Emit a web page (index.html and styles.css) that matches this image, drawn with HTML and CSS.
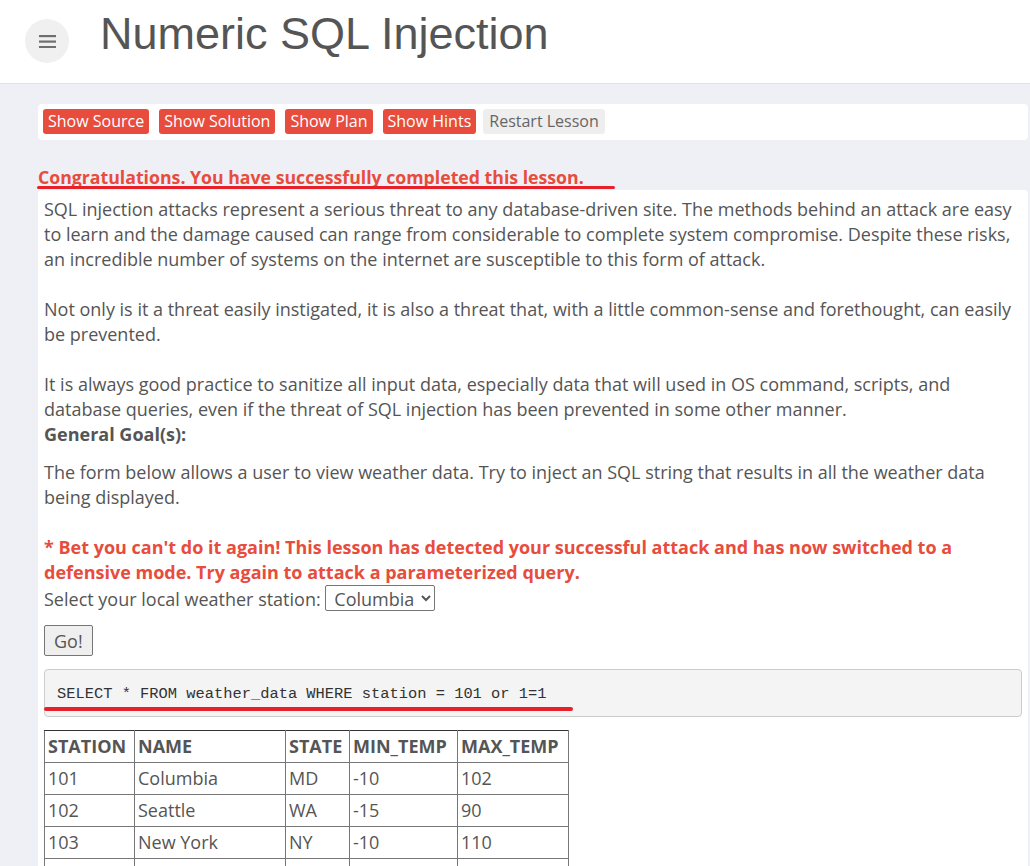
FILE: index.html
```html
<!DOCTYPE html>
<html>
<head>
<meta charset="utf-8">
<link rel="stylesheet" href="styles.css">
</head>
<body>
<header class="topbar">
  <button class="menu-btn" aria-label="menu">
    <svg width="17" height="13" viewBox="0 0 17 13"><rect x="0" y="0" width="17" height="2.2" fill="#6f6f6f"/><rect x="0" y="5.5" width="17" height="2.2" fill="#6f6f6f"/><rect x="0" y="11" width="17" height="2.2" fill="#6f6f6f"/></svg>
  </button>
  <h1 class="title">Numeric SQL Injection</h1>
</header>
<main class="main">
  <div class="toolbar">
    <span class="btn btn-red">Show Source</span>
    <span class="btn btn-red">Show Solution</span>
    <span class="btn btn-red">Show Plan</span>
    <span class="btn btn-red">Show Hints</span>
    <span class="btn btn-grey">Restart Lesson</span>
  </div>
  <div class="congrats"><span class="mark mark-congrats">Congratulations. You have successfully completed this lesson.</span></div>
  <section class="panel">
    <p class="para">SQL injection attacks represent a serious threat to any database-driven site. The methods behind an attack are easy to learn and the damage caused can range from considerable to complete system compromise. Despite these risks, an incredible number of systems on the internet are susceptible to this form of attack.</p>
    <p class="para">Not only is it a threat easily instigated, it is also a threat that, with a little common-sense and forethought, can easily be prevented.</p>
    <p class="para para-last">It is always good practice to sanitize all input data, especially data that will used in OS command, scripts, and database queries, even if the threat of SQL injection has been prevented in some other manner.</p>
    <div class="goal-title">General Goal(s):</div>
    <p class="para goal">The form below allows a user to view weather data. Try to inject an SQL string that results in all the weather data being displayed.</p>
    <div class="warn">* Bet you can't do it again! This lesson has detected your successful attack and has now switched to a defensive mode. Try again to attack a parameterized query.</div>
    <div class="form-row">Select your local weather station: <select class="station"><option>Columbia</option></select></div>
    <div class="go-row"><button class="go">Go!</button></div>
    <pre class="query"><span class="mark mark-query">SELECT * FROM weather_data WHERE station = 101 or 1=1</span></pre>
    <table class="data">
      <tr><th class="c1">STATION</th><th class="c2">NAME</th><th class="c3">STATE</th><th class="c4">MIN_TEMP</th><th class="c5">MAX_TEMP</th></tr>
      <tr><td>101</td><td>Columbia</td><td>MD</td><td>-10</td><td>102</td></tr>
      <tr><td>102</td><td>Seattle</td><td>WA</td><td>-15</td><td>90</td></tr>
      <tr><td>103</td><td>New York</td><td>NY</td><td>-10</td><td>110</td></tr>
      <tr><td>104</td><td>Houston</td><td>TX</td><td>20</td><td>120</td></tr>
    </table>
  </section>
</main>
</body>
</html>
```
FILE: styles.css
```css
html, body {
  margin: 0;
  padding: 0;
}
body {
  background: #eff0f5;
  font-family: "Open Sans", "Noto Sans", sans-serif;
  color: #555;
  overflow: hidden;
  height: 866px;
}
.topbar {
  background: #fff;
  height: 84px;
  border-bottom: 1px solid #e1e2e8;
  display: flex;
  align-items: flex-start;
  box-sizing: border-box;
}
.menu-btn {
  margin: 19px 0 0 25px;
  width: 44px;
  height: 44px;
  border-radius: 50%;
  border: none;
  background: #f0f0f0;
  display: flex;
  align-items: center;
  justify-content: center;
  padding: 0;
}
.title {
  margin: 8px 0 0 31px;
  font-family: "Liberation Sans", Arial, sans-serif;
  font-weight: normal;
  font-size: 45px;
  line-height: 52px;
  color: #555;
}
.main {
  padding: 20px 2px 0 38px;
}
.toolbar {
  background: #fff;
  border-radius: 4px;
  height: 36px;
  box-sizing: border-box;
  padding: 5px 5px;
  display: flex;
  gap: 10px;
}
.btn {
  display: inline-block;
  height: 25px;
  line-height: 25px;
  padding: 0 5px;
  border-radius: 3px;
  font-size: 16px;
  white-space: nowrap;
}
.btn-red {
  background: #e74c3c;
  color: #fff;
}
.btn-grey {
  background: #eeeeee;
  color: #666;
  padding: 0 6px;
  margin-left: -3px;
}
.congrats {
  height: 50px;
  box-sizing: border-box;
  padding-top: 25px;
  font-weight: bold;
  color: #e74c3c;
  font-size: 17.7px;
  line-height: 25px;
}
.mark {
  position: relative;
}
.mark-congrats::after {
  content: "";
  position: absolute;
  left: -1px;
  right: -31px;
  top: 21px;
  height: 3px;
  background: #e8202a;
  border-radius: 2px;
}
.panel {
  background: #fff;
  border-radius: 4px 4px 0 0;
  padding: 7px 6px 20px 6px;
  font-size: 18px;
  line-height: 25px;
  min-height: 700px;
}
.para {
  margin: 0 0 25px 0;
}
.para-last {
  margin-bottom: 0;
}
.goal-title {
  font-weight: bold;
}
.goal {
  margin-top: 13px;
}
.warn {
  color: #e74c3c;
  font-weight: bold;
}
.station {
  font-family: inherit;
  font-size: 18px;
  color: #555;
  height: 26px;
  border: 1px solid #767676;
  border-radius: 2px;
  background: #fff;
  padding: 0 4px;
}
.go-row {
  margin-top: 13px;
}
.go {
  font-family: inherit;
  font-size: 18px;
  color: #555;
  height: 31px;
  padding: 0 9px;
  background: #efefef;
  border: 1px solid #767676;
  border-radius: 2px;
}
.query {
  margin: 13px 0 13px 0;
  background: #f4f4f4;
  border: 1px solid #ccc;
  border-radius: 4px;
  padding: 13px 12px 11px 12px;
  font-family: "Liberation Mono", "DejaVu Sans Mono", monospace;
  font-size: 15.4px;
  line-height: 22px;
  color: #333;
}
.mark-query::after {
  content: "";
  position: absolute;
  left: -13px;
  right: -26px;
  top: 22px;
  height: 4px;
  background: #e8202a;
  border-radius: 2px;
}
.data {
  border-collapse: collapse;
  font-size: 18px;
  line-height: 24px;
}
.data th, .data td {
  border: 1px solid #777;
  padding: 3px 3px 4px 3px;
  text-align: left;
}
.data tr:first-child th {
  border-top: 1px solid #333;
}
.data th {
  font-weight: bold;
}
.c1 { width: 83px; }
.c2 { width: 144px; }
.c3 { width: 57px; }
.c4 { width: 101px; }
.c5 { width: 104px; }
```
